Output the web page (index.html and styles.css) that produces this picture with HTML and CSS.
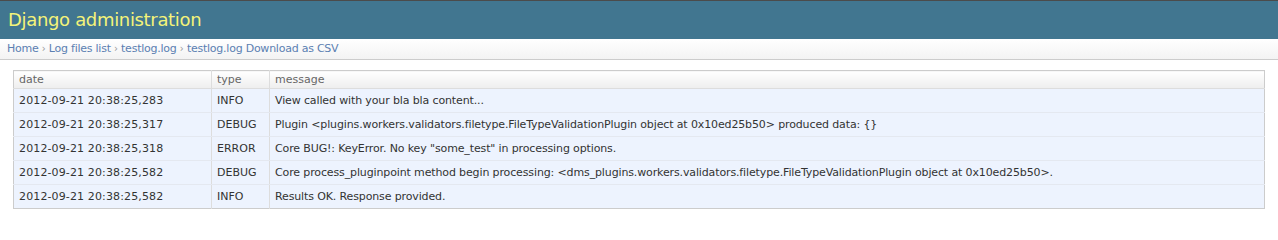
FILE: index.html
```html
<!DOCTYPE html>
<html>
<head>
<meta charset="utf-8">
<title>Django administration</title>
<link rel="stylesheet" href="styles.css">
</head>
<body>
<div class="header">
  <h1 class="site-name">Django administration</h1>
</div>
<div class="breadcrumbs">
  <a href="#">Home</a> <span class="sep">›</span> <a href="#">Log files list</a> <span class="sep">›</span> <a href="#">testlog.log</a> <span class="sep">›</span> <a href="#">testlog.log Download as CSV</a>
</div>
<div class="content">
  <table class="log">
    <colgroup>
      <col class="c-date">
      <col class="c-type">
      <col>
    </colgroup>
    <thead>
      <tr><th>date</th><th>type</th><th>message</th></tr>
    </thead>
    <tbody>
      <tr><td class="d">2012-09-21 20:38:25,283</td><td>INFO</td><td class="m">View called with your bla bla content...</td></tr>
      <tr><td class="d">2012-09-21 20:38:25,317</td><td>DEBUG</td><td class="m">Plugin &lt;plugins.workers.validators.filetype.FileTypeValidationPlugin object at 0x10ed25b50&gt; produced data: {}</td></tr>
      <tr><td class="d">2012-09-21 20:38:25,318</td><td>ERROR</td><td class="m">Core BUG!: KeyError. No key "some_test" in processing options.</td></tr>
      <tr><td class="d">2012-09-21 20:38:25,582</td><td>DEBUG</td><td class="m">Core process_pluginpoint method begin processing: &lt;dms_plugins.workers.validators.filetype.FileTypeValidationPlugin object at 0x10ed25b50&gt;.</td></tr>
      <tr><td class="d">2012-09-21 20:38:25,582</td><td>INFO</td><td class="m">Results OK. Response provided.</td></tr>
    </tbody>
  </table>
</div>
</body>
</html>
```
FILE: styles.css
```css
html, body {
  margin: 0;
  padding: 0;
  background: #fff;
  font-family: "DejaVu Sans", "Liberation Sans", sans-serif;
  color: #333;
}

.header {
  border-top: 1px solid #4b4b4b;
  background: #417690;
  height: 38px;
  display: flex;
  align-items: center;
}

.site-name {
  margin: 0;
  padding: 0 0 2px 8px;
  font-size: 18px;
  letter-spacing: -0.33px;
  font-weight: normal;
  color: #f4f379;
}

.breadcrumbs {
  height: 15px;
  padding: 2px 7px 3px 7px;
  font-size: 11px;
  letter-spacing: -0.24px;
  line-height: 15px;
  background: linear-gradient(#ffffff, #f3f3f3);
  border-bottom: 1px solid #cccccc;
  color: #999;
}

.breadcrumbs a {
  color: #5b80b2;
  text-decoration: none;
}

.breadcrumbs .sep {
  font-size: 10px;
}

.content {
  padding: 10px 13px;
}

.log {
  width: 100%;
  border: 1px solid #cccccc;
  border-collapse: collapse;
  table-layout: fixed;
  font-size: 11px;
}

.c-date { width: 198px; }
.c-type { width: 58px; }

.log th {
  text-align: left;
  font-weight: normal;
  color: #666;
  height: 17px;
  padding: 0 5px;
  line-height: 17px;
  background: linear-gradient(#ffffff, #eeeeee);
  border-bottom: 1px solid #dddddd;
  border-left: 1px solid #dddddd;
}

.log td {
  height: 23px;
  padding: 0 5px;
  line-height: 23px;
  background: #edf3fe;
  border-bottom: 1px solid #e4e8f0;
  border-left: 1px solid #dddddd;
  white-space: nowrap;
  color: #333;
}

.log td.d {
  letter-spacing: 0.13px;
}

.log td.m {
  letter-spacing: -0.13px;
}

.log th:first-child,
.log td:first-child {
  border-left: none;
}

.log tr:last-child td {
  border-bottom: none;
}
```
